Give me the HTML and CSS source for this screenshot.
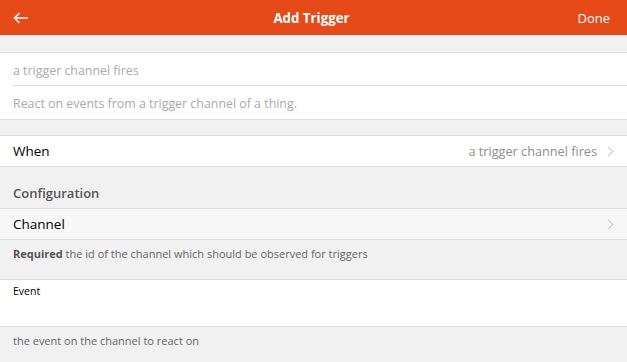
FILE: index.html
```html
<!DOCTYPE html>
<html lang="en">
<head>
  <meta charset="UTF-8">
  <meta name="viewport" content="width=device-width, initial-scale=1.0">
  <title>Add Trigger</title>
  <link rel="stylesheet" href="styles.css">
</head>
<body>
  <div class="navbar">
    <a class="nav-back" href="#">
      <svg width="16" height="12" viewBox="0 0 16 12">
        <path d="M15 6H1.5M6.5 1L1.5 6l5 5" fill="none" stroke="#fff" stroke-width="1.6"/>
      </svg>
    </a>
    <div class="nav-title">Add Trigger</div>
    <a class="nav-done" href="#">Done</a>
  </div>

  <div class="page">
    <div class="list intro">
      <div class="input-row">a trigger channel fires</div>
      <div class="input-row">React on events from a trigger channel of a thing.</div>
    </div>

    <div class="list">
      <div class="link-row">
        <span class="row-title">When</span>
        <span class="row-after">a trigger channel fires</span>
        <span class="chevron"></span>
      </div>
    </div>

    <div class="block-title">Configuration</div>

    <div class="list grey">
      <div class="link-row">
        <span class="row-title">Channel</span>
        <span class="row-after"></span>
        <span class="chevron"></span>
      </div>
    </div>
    <div class="block-footer tall"><b>Required</b> the id of the channel which should be observed for triggers</div>

    <div class="list">
      <div class="field-row">
        <div class="field-label">Event</div>
      </div>
    </div>
    <div class="block-footer">the event on the channel to react on</div>
  </div>
</body>
</html>
```

FILE: styles.css
```css
body {
  margin: 0;
  background: #f1f1f1;
  font-family: 'Open Sans', sans-serif;
  font-size: 13.5px;
  color: #000;
}

a {
  color: #fff;
  text-decoration: none;
}

.navbar {
  height: 35px;
  background: #e64a19;
  color: #fff;
  display: flex;
  align-items: center;
  padding: 0 17px 0 13px;
}

.nav-back {
  display: flex;
  width: 60px;
}

.nav-title {
  flex: 1;
  text-align: center;
  font-weight: bold;
  font-size: 13.3px;
}

.nav-done {
  width: 60px;
  text-align: right;
  font-size: 13px;
}

.page {
  padding-top: 17px;
}

.list {
  background: #fff;
  border-top: 1px solid #ddd;
  border-bottom: 1px solid #ddd;
}

.list.grey {
  background: #f7f7f7;
}

.intro {
  margin-bottom: 15px;
}

.input-row {
  height: 32px;
  line-height: 35px;
  margin-left: 13px;
  color: #aaa;
  font-size: 12.4px;
}

.input-row + .input-row {
  height: 33px;
  line-height: 35px;
  border-top: 1px solid #ddd;
}

.link-row {
  height: 30px;
  display: flex;
  align-items: center;
  padding: 0 15px 0 13px;
}

.row-title {
  flex: 1;
}

.row-after {
  color: #8e8e93;
  font-size: 12.7px;
  margin-right: 8px;
}

.chevron {
  width: 6px;
  height: 6px;
  border-top: 1.3px solid #c7c7cc;
  border-right: 1.3px solid #c7c7cc;
  transform: rotate(45deg);
}

.block-title {
  height: 41px;
  padding: 0 13px;
  line-height: 52px;
  box-sizing: border-box;
  color: #555;
  font-weight: 600;
  font-size: 13px;
}

.block-footer {
  padding: 5px 13px 0;
  height: 35px;
  color: #666;
  font-size: 11px;
  line-height: 18px;
}

.block-footer.tall {
  height: 34px;
}

.block-footer b {
  color: #555;
}

.field-row {
  height: 46px;
  padding: 4px 13px 0;
  box-sizing: border-box;
}

.field-label {
  font-size: 10.5px;
  line-height: 15px;
}
```
